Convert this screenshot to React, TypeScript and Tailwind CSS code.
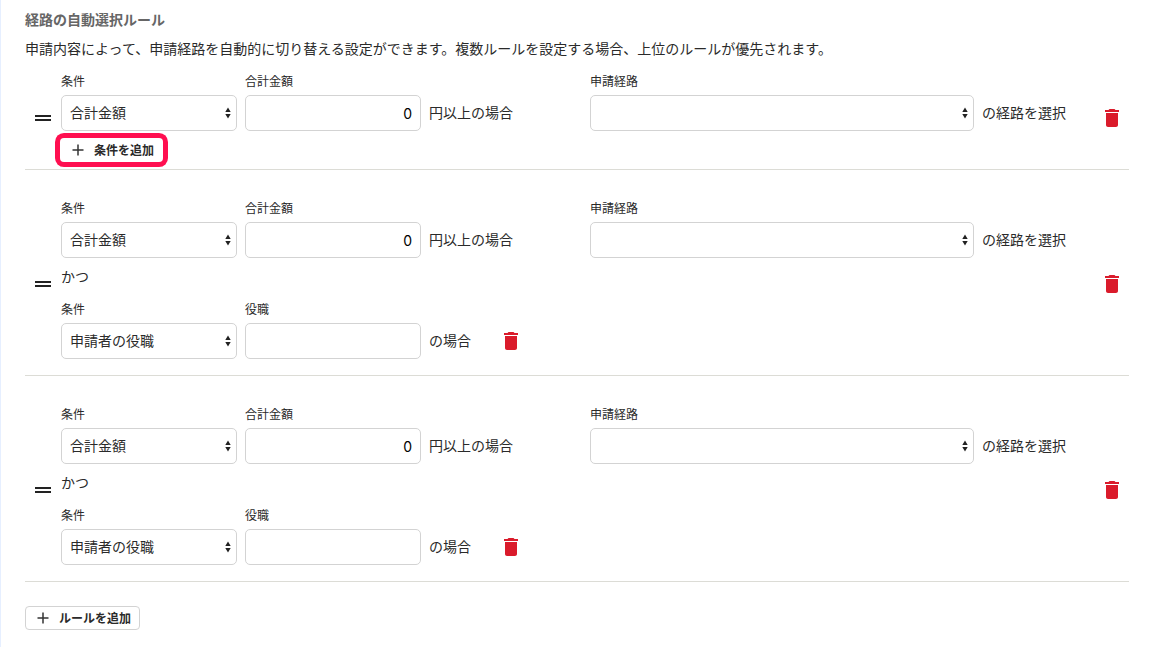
import { useId } from "react";
import type { ReactNode } from "react";

function TrashIcon() {
  return (
    <svg viewBox="0 0 24 24" className="size-6 fill-[#da1b2b]" aria-hidden="true">
      <path d="M6 19c0 1.1.9 2 2 2h8c1.1 0 2-.9 2-2V7H6v12zM19 4h-3.5l-1-1h-5l-1 1H5v2h14V4z" />
    </svg>
  );
}

function HandleIcon() {
  return (
    <svg viewBox="0 0 24 24" className="size-6 fill-[#222222]" aria-hidden="true">
      <path d="M20 9H4v2h16V9zM4 15h16v-2H4v2z" />
    </svg>
  );
}

function PlusIcon() {
  return (
    <svg viewBox="0 0 12 12" className="size-3" aria-hidden="true">
      <path d="M6 .5v11M.5 6h11" fill="none" stroke="#333" strokeWidth="1.5" />
    </svg>
  );
}

function DeleteButton({ label }: { label: string }) {
  return (
    <button type="button" aria-label={label} className="flex h-9 w-[34px] shrink-0 items-center justify-center">
      <TrashIcon />
    </button>
  );
}

function Field({ label, id, className, children }: { label: string; id: string; className: string; children: ReactNode }) {
  return (
    <div className={className}>
      <label htmlFor={id} className="mb-1.5 block text-xs leading-4">
        {label}
      </label>
      {children}
    </div>
  );
}

function SelectField({ label, options, className }: { label: string; options: string[]; className: string }) {
  const id = useId();
  return (
    <Field label={label} id={id} className={className}>
      <div className="relative">
        <select
          id={id}
          className="block h-9 w-full appearance-none rounded-[5px] border border-[#d3d3d3] bg-white pr-5 pb-0.5 pl-2 text-sm"
        >
          {options.map((option) => (
            <option key={option}>{option}</option>
          ))}
        </select>
        <svg
          viewBox="0 0 6 12"
          className="pointer-events-none absolute top-3 right-1.5 h-3 w-1.5 fill-[#222222]"
          aria-hidden="true"
        >
          <path d="M3 .5L5.7 5H.3zM3 11.5L5.7 7H.3z" />
        </svg>
      </div>
    </Field>
  );
}

function InputField({ label, value }: { label: string; value: string }) {
  const id = useId();
  return (
    <Field label={label} id={id} className="w-44 shrink-0">
      <input
        id={id}
        type="text"
        defaultValue={value}
        className="block h-9 w-full rounded-[5px] border border-[#d3d3d3] bg-white px-2 text-right font-['Inter','Noto_Sans_CJK_JP',sans-serif] text-sm text-black"
      />
    </Field>
  );
}

function Suffix({ children }: { children: ReactNode }) {
  return <span className="flex h-9 shrink-0 items-center pb-0.5 text-sm whitespace-nowrap">{children}</span>;
}

function Rule({ withPosition, first }: { withPosition: boolean; first: boolean }) {
  return (
    <li className={first ? "flex items-center border-b border-[#dcdcd6] pb-[7px]" : "flex items-center border-b border-[#dcdcd6] pt-[30px] pb-[7px]"}>
      <button type="button" aria-label="並べ替え" className="flex w-9 shrink-0 cursor-grab justify-center">
        <HandleIcon />
      </button>
      <div className={withPosition ? "min-w-0 flex-1 pb-[9px]" : "min-w-0 flex-1"}>
        <div className="flex items-end">
          <div className="flex w-[529px] shrink-0 items-end gap-2">
            <SelectField label="条件" options={["合計金額", "申請者の役職"]} className="w-44 shrink-0" />
            <InputField label="合計金額" value="0" />
            <Suffix>円以上の場合</Suffix>
          </div>
          <div className="flex min-w-0 flex-1 items-end gap-2 pr-[29px]">
            <SelectField label="申請経路" options={[""]} className="min-w-0 flex-1" />
            <Suffix>の経路を選択</Suffix>
          </div>
        </div>
        {withPosition ? (
          <>
            <p className="mt-2 mb-[15px] text-sm leading-5">かつ</p>
            <div className="flex items-end gap-2">
              <SelectField label="条件" options={["申請者の役職", "合計金額"]} className="w-44 shrink-0" />
              <InputField label="役職" value="" />
              <Suffix>の場合</Suffix>
              <div className="pl-[15px]">
                <DeleteButton label="条件を削除" />
              </div>
            </div>
          </>
        ) : (
          <button
            type="button"
            className="mt-[7px] -ml-px flex h-6 items-center gap-2.5 rounded-[4px] pr-[9px] pl-3 text-xs font-bold ring-[5px] ring-[#ff0f50]"
          >
            <PlusIcon />
            <span className="pb-px">条件を追加</span>
          </button>
        )}
      </div>
      <DeleteButton label="ルールを削除" />
    </li>
  );
}

export default function App() {
  return (
    <main className="min-h-screen border-l border-[#e6efff] bg-white pt-[9px] pr-[23px] pb-4 pl-6 font-['Noto_Sans_CJK_JP',sans-serif] text-[#2a2a2a]">
      <h1 className="text-sm leading-5 font-bold text-[#666666]">経路の自動選択ルール</h1>
      <p className="mt-[9px] text-sm leading-5">
        申請内容によって、申請経路を自動的に切り替える設定ができます。複数ルールを設定する場合、上位のルールが優先されます。
      </p>
      <ul className="mt-[15px]">
        <Rule first withPosition={false} />
        <Rule first={false} withPosition />
        <Rule first={false} withPosition />
      </ul>
      <button
        type="button"
        className="mt-6 flex h-6 items-center gap-2.5 rounded-[4px] border border-[#d3d3d3] bg-white pr-2 pl-[11px] text-xs font-bold"
      >
        <PlusIcon />
        <span className="pb-px">ルールを追加</span>
      </button>
    </main>
  );
}
